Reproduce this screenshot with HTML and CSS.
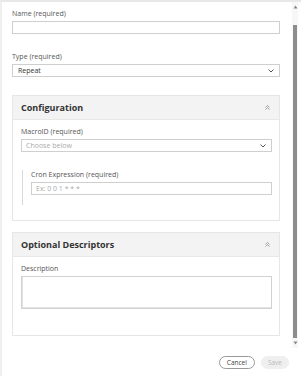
FILE: index.html
```html
<!DOCTYPE html>
<html lang="en">
<head>
    <meta charset="UTF-8">
    <meta name="viewport" content="width=device-width, initial-scale=1.0">
    <title>Schedule</title>
    <link rel="stylesheet" href="styles.css">
</head>
<body>
    <div class="dialog">
        <div class="scroll-area">
            <div class="content">
                <!-- Top level fields -->
                <div class="field">
                    <label class="label">Name (required)</label>
                    <div class="input"></div>
                </div>
                <div class="field">
                    <label class="label">Type (required)</label>
                    <div class="input select">
                        <span class="value">Repeat</span>
                        <svg class="chevron" width="6" height="4" viewBox="0 0 6 4"><path d="M0.5 0.5 L3 3 L5.5 0.5" fill="none" stroke="#555" stroke-width="1"/></svg>
                    </div>
                </div>

                <div class="card">
                    <div class="card-header">
                        <span class="card-title">Configuration</span>
                        <svg class="collapse" width="5" height="5" viewBox="0 0 5 5"><path d="M0.5 2.3 L2.5 0.5 L4.5 2.3 M0.5 4.5 L2.5 2.7 L4.5 4.5" fill="none" stroke="#999" stroke-width="0.9"/></svg>
                    </div>
                    <div class="card-body">
                        <div class="field">
                            <label class="label">MacroID (required)</label>
                            <div class="input select">
                                <span class="placeholder">Choose below</span>
                                <svg class="chevron" width="6" height="4" viewBox="0 0 6 4"><path d="M0.5 0.5 L3 3 L5.5 0.5" fill="none" stroke="#555" stroke-width="1"/></svg>
                            </div>
                        </div>
                        <div class="nested">
                            <label class="label">Cron Expression (required)</label>
                            <div class="input">
                                <span class="placeholder">Ex: 0 0 1 * * *</span>
                            </div>
                        </div>
                    </div>
                </div>

                <div class="card">
                    <div class="card-header">
                        <span class="card-title">Optional Descriptors</span>
                        <svg class="collapse" width="5" height="5" viewBox="0 0 5 5"><path d="M0.5 2.3 L2.5 0.5 L4.5 2.3 M0.5 4.5 L2.5 2.7 L4.5 4.5" fill="none" stroke="#999" stroke-width="0.9"/></svg>
                    </div>
                    <div class="card-body tall">
                        <div class="field">
                            <label class="label">Description</label>
                            <div class="input textarea"></div>
                        </div>
                    </div>
                </div>
            </div>

            <div class="scrollbar">
                <svg width="5" height="4" viewBox="0 0 5 4"><path d="M0.5 3.5 L2.5 0.5 L4.5 3.5 Z" fill="#888"/></svg>
                <div class="thumb"></div>
                <svg width="5" height="4" viewBox="0 0 5 4"><path d="M0.5 0.5 L2.5 3.5 L4.5 0.5 Z" fill="#888"/></svg>
            </div>
        </div>

        <div class="footer">
            <button class="btn cancel">Cancel</button>
            <button class="btn save">Save</button>
        </div>
    </div>
</body>
</html>
```

FILE: styles.css
```css
* {
    box-sizing: border-box;
}
body {
    margin: 0;
    padding: 0;
    width: 301px;
    height: 376px;
    overflow: hidden;
    background-color: #fff;
    font-family: "Open Sans", sans-serif;
    color: #444;
}
.dialog {
    display: flex;
    flex-direction: column;
    height: 376px;
    border-top: 2px solid #e8e8e8;
    border-left: 2px solid #efefef;
}
.scroll-area {
    display: flex;
    height: 346px;
}
.content {
    flex: 1;
    padding: 7px 0 0 10px;
}
.scrollbar {
    width: 6px;
    margin-right: 3px;
    margin-left: 12px;
    display: flex;
    flex-direction: column;
    align-items: center;
    padding-top: 3px;
    background-color: #f7f7f7;
}
.scrollbar svg {
    display: block;
}
.thumb {
    width: 4px;
    height: 313px;
    margin: 16px 0 3px;
    background-color: #8d8d8d;
}
.field {
    margin-bottom: 18px;
}
.label {
    display: block;
    font-size: 7px;
    line-height: 10px;
    color: #555;
    margin-bottom: 2px;
}
.input {
    height: 13px;
    border: 1px solid #cfcfcf;
    display: flex;
    align-items: center;
    padding: 0 4px;
    font-size: 7px;
    color: #333;
}
.select {
    justify-content: space-between;
}
.value {
    padding-left: 1px;
}
.placeholder {
    color: #aaa;
}
.chevron {
    display: block;
    margin-right: 1px;
}
.card {
    border: 1px solid #e6e6e6;
    margin-top: 0;
    margin-bottom: 11px;
}
.card-header {
    display: flex;
    justify-content: space-between;
    align-items: center;
    height: 24px;
    padding: 0 9px 0 8px;
    background-color: #f3f3f3;
    border-bottom: 1px solid #e8e8e8;
}
.card-title {
    font-size: 9px;
    font-weight: bold;
    color: #333;
}
.collapse {
    display: block;
}
.card-body {
    padding: 7px 7px 15px 8px;
}
.card-body .field {
    margin-bottom: 18px;
}
.nested {
    border-left: 1px solid #d8d8d8;
    padding: 0 0 10px 8px;
    margin-left: 1px;
}
.tall {
    padding-bottom: 8px;
}
.textarea {
    height: 33px;
    border: 1px solid #d2d2d2;
    box-shadow: inset 1px -1px 0 #e2e2e2;
}
.footer {
    display: flex;
    justify-content: flex-end;
    align-items: center;
    gap: 6px;
    padding: 0 12px 0 0;
    height: 28px;
}
.btn {
    font-family: "Open Sans", sans-serif;
    font-size: 6.5px;
    height: 13px;
    border-radius: 7px;
    padding: 0 7px;
    line-height: 11px;
}
.cancel {
    background-color: #fff;
    border: 1px solid #999;
    color: #444;
}
.save {
    background-color: #efefef;
    border: 1px solid #efefef;
    color: #bbb;
    padding: 0 6px;
}
```
